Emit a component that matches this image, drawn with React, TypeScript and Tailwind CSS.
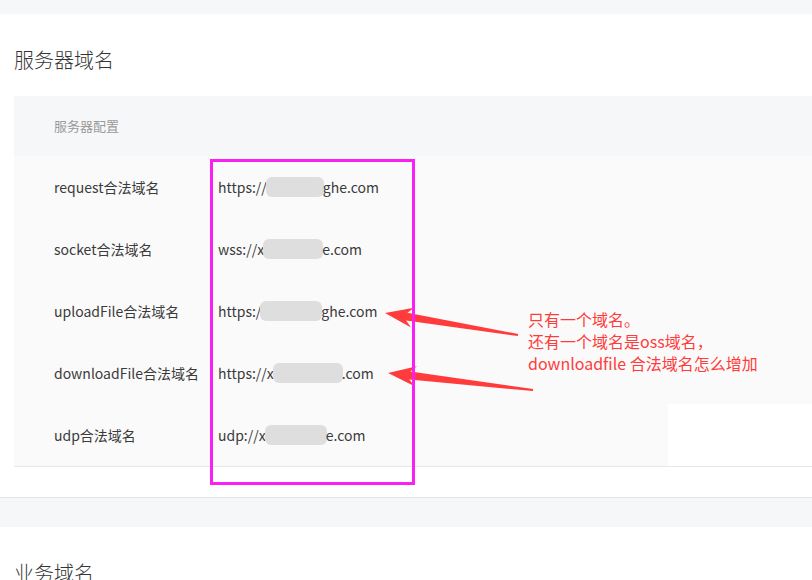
import React from "react";

type Row = { label: string; head: string; blob: number; tail: string; white?: boolean };

const rows: Row[] = [
  { label: "request合法域名", head: "https://", blob: 58, tail: "ghe.com" },
  { label: "socket合法域名", head: "wss://x", blob: 60, tail: "e.com" },
  { label: "uploadFile合法域名", head: "https:/", blob: 62, tail: "ghe.com" },
  { label: "downloadFile合法域名", head: "https://x", blob: 70, tail: ".com" },
  { label: "udp合法域名", head: "udp://x", blob: 62, tail: "e.com", white: true },
];

function Arrow({ points }: { points: string }) {
  return <polygon points={points} fill="#ff3b3b" />;
}

export default function App() {
  return (
    <div className="relative w-[812px] h-[580px] overflow-hidden bg-[#f6f7f9] pt-[14px] font-['Noto_Sans_CJK_SC',sans-serif] text-[#353535]">
      {/* 服务器域名 */}
      <section className="bg-white border-b border-[#e2e3e5] pt-[32px] pb-[30px]">
        <h2 className="px-[14px] text-[20px] leading-[28px] font-light mb-[22px]">服务器域名</h2>
        <div className="ml-[14px] border-b border-[#e6e6e6]">
          <div className="h-[60px] flex items-center pl-[40px] bg-[#f6f7f9] text-[13px] text-[#9a9a9a]">
            服务器配置
          </div>
          {rows.map((r) => (
            <div key={r.label} className="relative h-[62px] grid grid-cols-[204px_1fr] items-center bg-[#fafafa] text-[14px]">
              <div className="pl-[40px] text-[#3b3b3b]">{r.label}</div>
              <div className="flex items-center text-[#3b3b3b] whitespace-nowrap">
                <span>{r.head}</span>
                <span
                  className="inline-block h-[20px] rounded-[6px] bg-[#dedede] mx-[-1px]"
                  style={{ width: r.blob }}
                />
                <span>{r.tail}</span>
              </div>
              {r.white && <div className="absolute right-0 top-0 bottom-0 w-[144px] bg-white" />}
            </div>
          ))}
        </div>
      </section>

      <div className="h-[29px]" />

      {/* 业务域名 */}
      <section className="bg-white pt-[32px] h-[200px]">
        <h2 className="px-[14px] text-[20px] leading-[28px] font-light">业务域名</h2>
      </section>

      {/* annotations */}
      <svg className="absolute left-0 top-0" width="812" height="580">
        <Arrow points="385,313 414.2,307.7 407.4,312.7 518.2,334 517.8,336 406.1,320.5 411,327.5" />
        <Arrow points="388,373 417,366.3 410.3,371.6 533.1,389 532.9,391 409.3,379.6 414.6,386.2" />
      </svg>
      <div className="absolute left-[210px] top-[159px] w-[205px] h-[326px] border-[3px] border-[#fb1ff5]" />
      <div className="absolute left-[528px] top-[308px] text-[16px] leading-[22px] text-[#ff3c3c] whitespace-nowrap">
        <div>只有一个域名。</div>
        <div>还有一个域名是oss域名，</div>
        <div>downloadfile 合法域名怎么增加</div>
      </div>
    </div>
  );
}
